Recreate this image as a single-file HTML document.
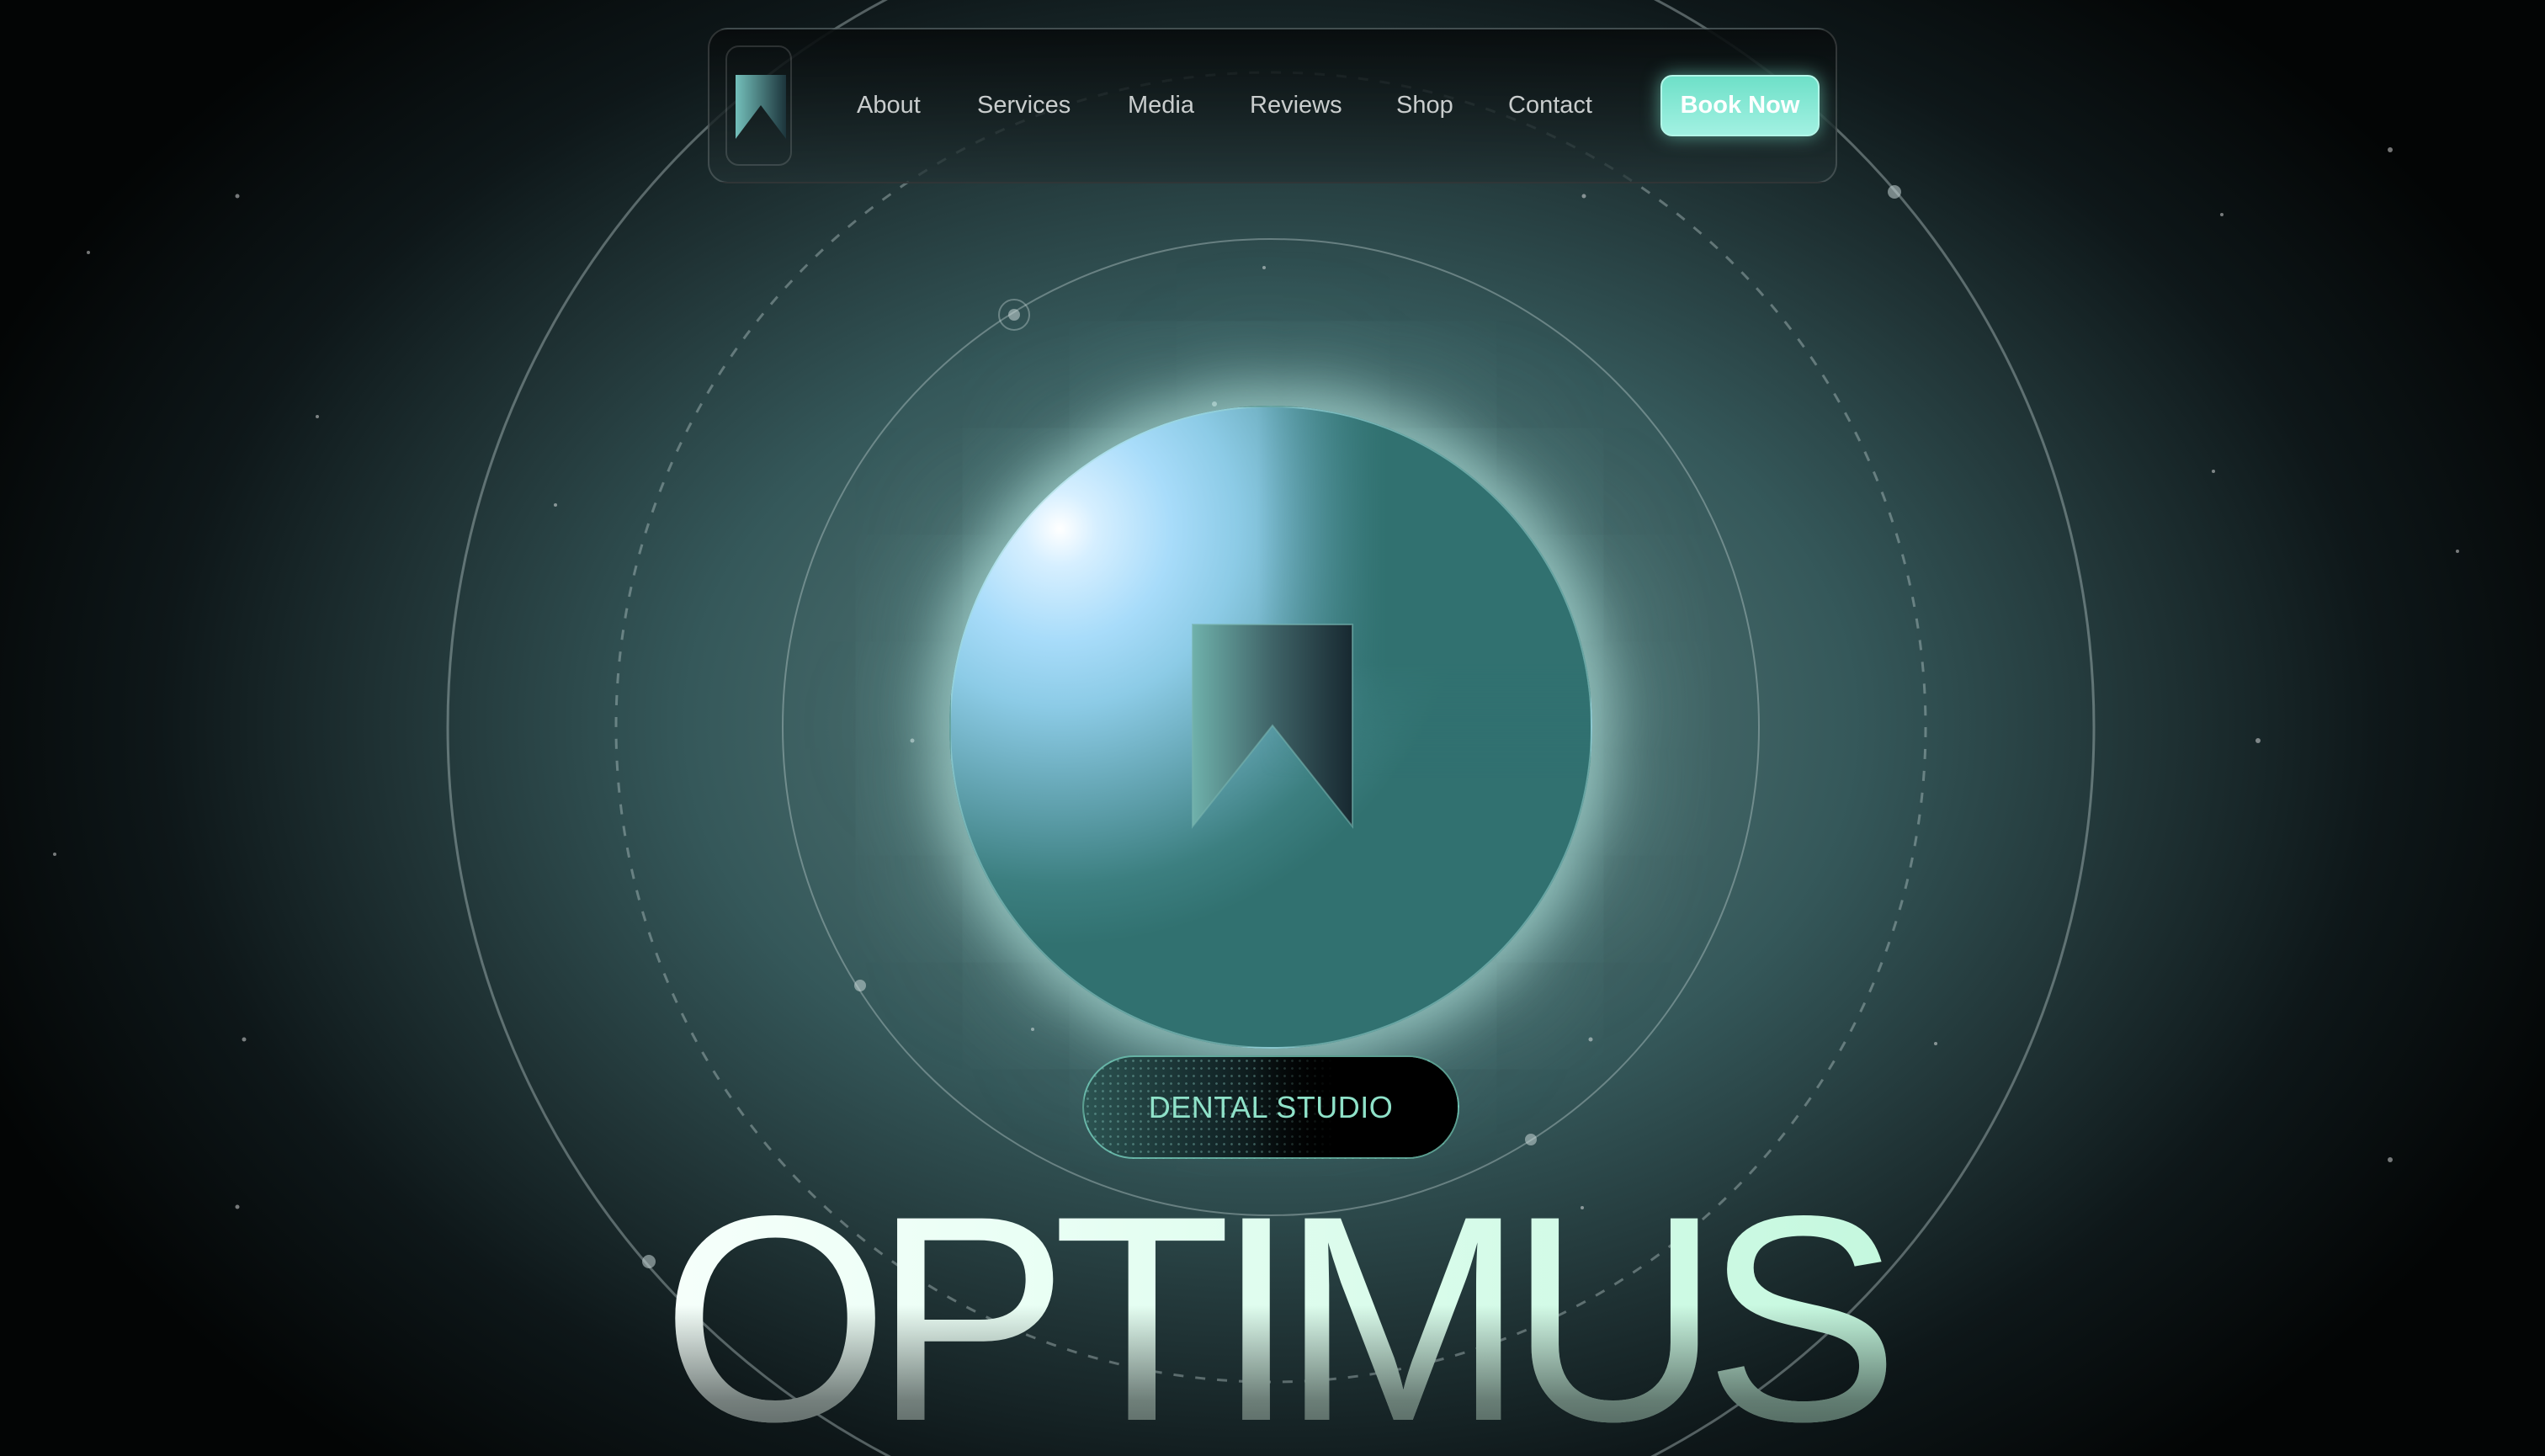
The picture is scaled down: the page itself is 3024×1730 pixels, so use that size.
<!DOCTYPE html>
<html><head><meta charset="utf-8"><style>
*{margin:0;padding:0;box-sizing:border-box}
html,body{width:3024px;height:1730px;overflow:hidden;background:#000}
body{position:relative;font-family:"Liberation Sans",sans-serif;
background:radial-gradient(ellipse 1650px 1150px at 1510px 860px,#5a7e7d 0%,#4a6d6d 22%,#35585a 42%,#213537 62%,#0e1719 80%,#030505 100%)}
.abs{position:absolute}
.nav{left:841px;top:33px;width:1342px;height:185px;border:2px solid rgba(255,255,255,0.16);border-radius:24px;background:linear-gradient(180deg,rgba(8,12,13,0.92),rgba(34,50,52,0.7))}
.logo{left:862px;top:54px;width:79px;height:143px;border:2px solid rgba(255,255,255,0.14);border-radius:16px}
.nav a{position:absolute;top:73px;font-size:29px;color:#c9cdcd;text-decoration:none;line-height:38px}
.btn{left:1973px;top:89px;width:189px;height:73px;border-radius:14px;background:linear-gradient(180deg,#6ee0c8,#a2f1e2);box-shadow:0 0 22px rgba(130,240,215,0.55);color:#fff;font-size:29px;font-weight:bold;text-align:center;line-height:69px;border:2px solid #b3f6e8}
.orb{left:1128px;top:482px;width:764px;height:764px;border-radius:50%;overflow:hidden;
background:radial-gradient(circle at 17% 19%,#ffffff 0%,#d6efff 5%,#a8dcfa 15%,#8ccbe6 24%,#5e9fab 38%,#3c7f80 48%,#317170 56%,#317170 100%);
box-shadow:0 0 60px 20px rgba(200,250,242,0.55),0 0 160px 60px rgba(140,210,205,0.28);border:2px solid rgba(160,220,215,0.5)}
.orb i{position:absolute;left:0;top:0;width:100%;height:100%;background:linear-gradient(90deg,rgba(49,113,112,0) 48%,rgba(49,113,112,1) 68%);-webkit-mask:linear-gradient(180deg,#000 0%,#000 40%,transparent 58%)}
.pill{left:1286px;top:1254px;width:448px;height:123px;border-radius:62px;border:2px solid rgba(130,225,205,0.7);
background:radial-gradient(rgba(150,220,210,0.35) 1.2px,transparent 1.6px) 0 0/9px 9px,linear-gradient(90deg,#2c5452 0%,#14282a 35%,#000 65%,#000 100%);
overflow:hidden}
.pill span{position:absolute;left:0;right:0;top:0;line-height:119px;text-align:center;font-size:36px;color:#8fe2c9;letter-spacing:0.5px}
.pill .cover{position:absolute;left:200px;right:0;top:0;bottom:0;background:linear-gradient(90deg,rgba(0,0,0,0),#000 40%)}
.title{left:0;width:3024px;top:1407px;height:320px;text-align:center;font-size:348px;line-height:320px;letter-spacing:-19px;
background:linear-gradient(180deg,rgba(15,24,24,0) 45%,rgba(15,24,24,0.55) 80%,rgba(15,24,24,0.7) 100%),linear-gradient(90deg,#ffffff 15%,#eafff5 40%,#b5f5d5 88%);-webkit-background-clip:text;background-clip:text;color:transparent}
</style></head><body>
<svg class="abs" style="left:0;top:0" width="3024" height="1730">
<g fill="none" stroke="rgba(200,215,215,0.38)">
<circle cx="1510" cy="864" r="978" stroke-width="3"/>
<circle cx="1510" cy="864" r="778" stroke-width="3" stroke-dasharray="12 14"/>
<circle cx="1510" cy="864" r="580" stroke-width="2"/>
<circle cx="1205" cy="374" r="18" stroke-width="2"/>
</g>
<g fill="rgba(200,215,215,0.55)">
<circle cx="1205" cy="374" r="7"/><circle cx="1022" cy="1171" r="7"/><circle cx="1819" cy="1354" r="7"/><circle cx="2251" cy="228" r="8"/><circle cx="771" cy="1499" r="8"/>
</g>
<g fill="rgba(255,255,255,0.45)">
<circle cx="282" cy="233" r="2.5"/><circle cx="1882" cy="233" r="2.5"/><circle cx="1443" cy="480" r="3"/><circle cx="1084" cy="880" r="2.5"/><circle cx="2683" cy="880" r="3"/><circle cx="290" cy="1235" r="2.5"/><circle cx="282" cy="1434" r="2.5"/><circle cx="2840" cy="178" r="3"/><circle cx="2840" cy="1378" r="3"/><circle cx="1890" cy="1235" r="2.5"/><circle cx="1227" cy="1223" r="2"/><circle cx="1880" cy="1435" r="2"/><circle cx="1502" cy="318" r="2"/><circle cx="65" cy="1015" r="2"/><circle cx="2920" cy="655" r="2"/><circle cx="377" cy="495" r="2"/><circle cx="2630" cy="560" r="2"/><circle cx="105" cy="300" r="2"/><circle cx="2640" cy="255" r="2"/><circle cx="660" cy="600" r="2"/><circle cx="2300" cy="1240" r="2"/>
</g>
</svg>
<div class="abs orb"><i></i></div>
<svg class="abs" style="left:1415px;top:740px" width="196" height="246" viewBox="0 0 196 246">
<defs><linearGradient id="bm" x1="0" x2="1"><stop offset="0" stop-color="#6fb1ab"/><stop offset="0.5" stop-color="#3f6367"/><stop offset="1" stop-color="#172830"/></linearGradient></defs>
<path d="M2 2H192V242L97 122L2 242Z" fill="url(#bm)" stroke="rgba(120,180,175,0.6)" stroke-width="2"/>
</svg>
<div class="abs nav"></div>
<div class="abs logo"></div>
<svg class="abs" style="left:874px;top:89px" width="60" height="76" viewBox="0 0 60 76">
<defs><linearGradient id="bm2" x1="0" x2="1"><stop offset="0" stop-color="#74c0bb"/><stop offset="1" stop-color="#1c343b"/></linearGradient></defs>
<path d="M0 0H60V76L30 36L0 76Z" fill="url(#bm2)"/>
</svg>
<div class="nav abs" style="border:none;background:none">
<a style="left:177px">About</a><a style="left:320px">Services</a><a style="left:499px">Media</a><a style="left:644px">Reviews</a><a style="left:818px">Shop</a><a style="left:951px">Contact</a>
</div>
<div class="abs btn">Book Now</div>
<div class="abs pill"><div class="cover"></div><span>DENTAL STUDIO</span></div>
<div class="abs title">OPTIMUS</div>
</body></html>
